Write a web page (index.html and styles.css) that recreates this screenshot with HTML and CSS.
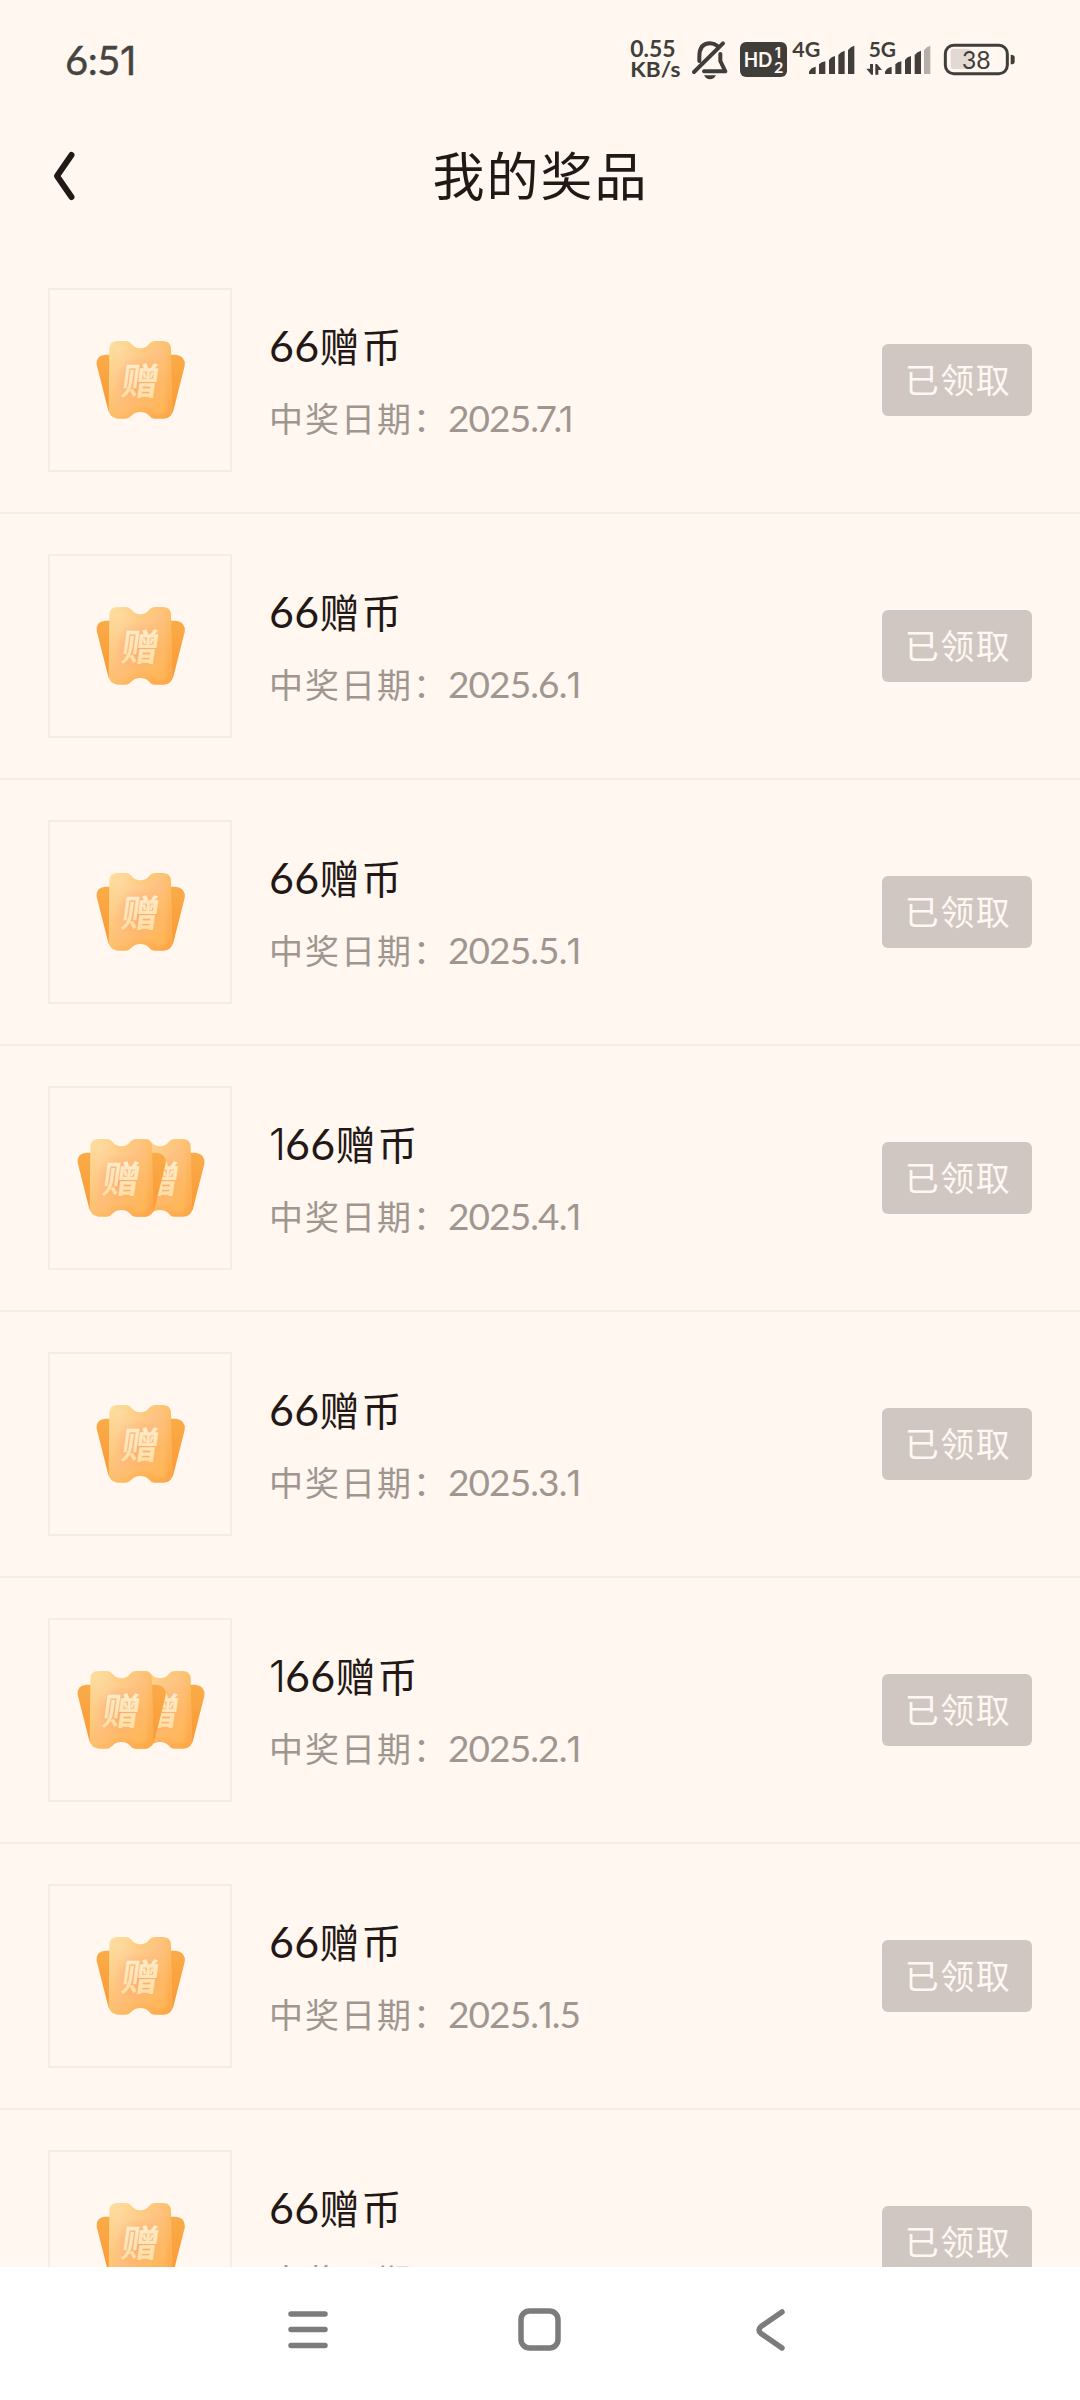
FILE: index.html
```html
<!DOCTYPE html>
<html lang="zh-CN">
<head>
<meta charset="utf-8">
<title>我的奖品</title>
<link rel="stylesheet" href="styles.css">
</head>
<body>
<svg class="defs" aria-hidden="true">
  <defs>
    <linearGradient id="back" x1="0" y1="0" x2="0" y2="1"><stop offset="0" stop-color="#f9ac49"/><stop offset="1" stop-color="#fb9833"/></linearGradient>
    <linearGradient id="rim" x1="0" y1="0" x2="1" y2="1"><stop offset="0" stop-color="#fde0a2"/><stop offset=".5" stop-color="#fdbf6d"/><stop offset="1" stop-color="#fda544"/></linearGradient>
    <linearGradient id="face" x1="0" y1="0" x2=".8" y2="1"><stop offset="0" stop-color="#fedea4"/><stop offset=".5" stop-color="#fec07d"/><stop offset="1" stop-color="#ffb658"/></linearGradient>
    <radialGradient id="glow"><stop offset="0" stop-color="#f99d67" stop-opacity=".6"/><stop offset="1" stop-color="#f99d67" stop-opacity="0"/></radialGradient>
    <linearGradient id="ink" x1="0" y1="0" x2="0" y2="1"><stop offset="0" stop-color="#fff0d9"/><stop offset="1" stop-color="#ffdc9d"/></linearGradient>
    <filter id="soft" x="-10%" y="-10%" width="120%" height="120%"><feGaussianBlur stdDeviation="4"/></filter>
  </defs>
  <symbol id="ticket" viewBox="0 0 600 600">
    <path d="M195 224H408Q438 228 434 258L400 392Q397 403 385 403L370 380H230L220 403Q207 400 205 392L170 254Q168 226 195 224Z" fill="url(#back)"/>
    <path d="M233 183H258Q268 183 275 192Q286 205 301 205Q317 205 327 192Q334 183 344 183H368Q393 183 393 208L398 390Q396 415 372 416H342Q332 415 326 406Q316 396 301 396Q286 396 276 406Q268 415 258 416H232Q208 412 206 390L208 208Q208 183 233 183Z" fill="url(#rim)"/>
    <path filter="url(#soft)" d="M242 198H258Q276 218 301 218Q326 218 344 198H362Q378 200 378 218V384Q376 401 360 401H346Q332 381 301 381Q272 381 256 401H240Q224 400 224 384V218Q226 200 242 198Z" fill="url(#face)"/>
    <ellipse cx="298" cy="305" rx="75" ry="75" fill="url(#glow)"/>
  </symbol>
</svg>
<div class="screen">
  <header class="status">
    <div class="clock">6:5<span class="one">1</span></div>
    <svg class="status-icons" viewBox="0 0 1320 240" fill="#403e3a">
      <text x="91" y="111" font-size="67" textLength="136" lengthAdjust="spacingAndGlyphs">0.55</text>
      <text x="91" y="171" font-size="63" textLength="150" lengthAdjust="spacingAndGlyphs">KB/s</text>
      <g fill="none" stroke="#403e3a" stroke-width="12" stroke-linecap="round" stroke-linejoin="round">
        <path d="M369 70L282 156M298 123V110Q298 70 330 70Q342 70 351 77M361 102V123L376 154H312"/>
      </g>
      <path d="M312 166H348Q342 178 330 178Q318 178 312 166Z"/>
      <rect x="420" y="66" width="141" height="105" rx="18"/>
      <g fill="#fff7f0">
        <text x="431" y="141" font-size="64" textLength="86" lengthAdjust="spacingAndGlyphs">HD</text>
        <text class="one" x="524" y="113" font-size="43">1</text>
        <text x="522" y="158" font-size="48">2</text>
      </g>
      <text x="577" y="112" font-size="65" textLength="84" lengthAdjust="spacingAndGlyphs">4G</text>
      <path d="M627 162V155Q632 143 647 140V162ZM657 162V133Q664 126 676 124V162ZM687 162V120Q694 110 705 108V162ZM715 162V105Q723 94 734 92V162ZM744 162V90Q752 79 763 77V162Z"/>
      <text x="806" y="112" font-size="65" textLength="82" lengthAdjust="spacingAndGlyphs">5G</text>
      <path d="M799 146H810V132H819V164H814ZM826 132H831L846 150H835V164H826ZM855 162V155Q860 143 875 140V162ZM886 162V133Q893 126 904 124V162ZM915 162V120Q922 110 933 108V162ZM944 162V105Q952 94 963 92V162Z"/>
      <path d="M972 162V90Q980 79 991 77V162Z" fill="#b5afa9"/>
      <rect x="1052" y="86" width="62" height="61" rx="10" fill="#e2d9d5"/>
      <rect x="1036" y="76" width="186" height="85" rx="25" fill="none" stroke="#403e3a" stroke-width="9"/>
      <path d="M1232 104Q1244 104 1244 112V125Q1244 133 1232 133Z"/>
      <text class="level" x="1086" y="146" font-size="76" textLength="86" lengthAdjust="spacingAndGlyphs">38</text>
    </svg>
  </header>
  <div class="titlebar">
    <svg class="back" viewBox="0 0 30 56"><path d="M22.500 7L8 28L22.500 49"/></svg>
    <h1>我的奖品</h1>
  </div>
  <main class="list">
    <article class="row">
      <svg class="thumb" viewBox="30 30 540 540"><use href="#ticket" width="600" height="600"/><text transform="translate(240 344) skewX(-8)">赠</text></svg>
      <div class="info"><h2><span class="num">66</span>赠币</h2><p>中奖日期：<span class="date">2025<span class="tight">.7.<span class="one">1</span></span></span></p></div>
      <button class="claimed">已领取</button>
    </article>
    <article class="row">
      <svg class="thumb" viewBox="30 30 540 540"><use href="#ticket" width="600" height="600"/><text transform="translate(240 344) skewX(-8)">赠</text></svg>
      <div class="info"><h2><span class="num">66</span>赠币</h2><p>中奖日期：<span class="date">2025.6.<span class="one">1</span></span></p></div>
      <button class="claimed">已领取</button>
    </article>
    <article class="row">
      <svg class="thumb" viewBox="30 30 540 540"><use href="#ticket" width="600" height="600"/><text transform="translate(240 344) skewX(-8)">赠</text></svg>
      <div class="info"><h2><span class="num">66</span>赠币</h2><p>中奖日期：<span class="date">2025.5.<span class="one">1</span></span></p></div>
      <button class="claimed">已领取</button>
    </article>
    <article class="row">
      <svg class="thumb" viewBox="30 30 540 540"><use href="#ticket" x="59" width="600" height="600"/><text transform="translate(299 344) skewX(-8)">赠</text><use href="#ticket" x="-57" width="600" height="600"/><text transform="translate(183 344) skewX(-8)">赠</text></svg>
      <div class="info"><h2><span class="num"><span class="one">1</span>66</span>赠币</h2><p>中奖日期：<span class="date">2025.4.<span class="one">1</span></span></p></div>
      <button class="claimed">已领取</button>
    </article>
    <article class="row">
      <svg class="thumb" viewBox="30 30 540 540"><use href="#ticket" width="600" height="600"/><text transform="translate(240 344) skewX(-8)">赠</text></svg>
      <div class="info"><h2><span class="num">66</span>赠币</h2><p>中奖日期：<span class="date">2025.3.<span class="one">1</span></span></p></div>
      <button class="claimed">已领取</button>
    </article>
    <article class="row">
      <svg class="thumb" viewBox="30 30 540 540"><use href="#ticket" x="59" width="600" height="600"/><text transform="translate(299 344) skewX(-8)">赠</text><use href="#ticket" x="-57" width="600" height="600"/><text transform="translate(183 344) skewX(-8)">赠</text></svg>
      <div class="info"><h2><span class="num"><span class="one">1</span>66</span>赠币</h2><p>中奖日期：<span class="date">2025.2.<span class="one">1</span></span></p></div>
      <button class="claimed">已领取</button>
    </article>
    <article class="row">
      <svg class="thumb" viewBox="30 30 540 540"><use href="#ticket" width="600" height="600"/><text transform="translate(240 344) skewX(-8)">赠</text></svg>
      <div class="info"><h2><span class="num">66</span>赠币</h2><p>中奖日期：<span class="date">2025.<span class="one">1</span>.5</span></p></div>
      <button class="claimed">已领取</button>
    </article>
    <article class="row">
      <svg class="thumb" viewBox="30 30 540 540"><use href="#ticket" width="600" height="600"/><text transform="translate(240 344) skewX(-8)">赠</text></svg>
      <div class="info"><h2><span class="num">66</span>赠币</h2><p>中奖日期：<span class="date">2024.9.<span class="one">1</span></span></p></div>
      <button class="claimed">已领取</button>
    </article>
  </main>
  <nav class="navbar">
    <svg viewBox="0 0 60 60"><path d="M13 15H47M13 30.500H47M13 46.500H47"/></svg>
    <svg viewBox="0 0 60 60"><rect x="11" y="12" width="37" height="37" rx="8.500"/></svg>
    <svg viewBox="0 0 60 60"><path d="M40 13L19 27.500Q15 31 19 34.500L40 49"/></svg>
  </nav>
</div>
</body>
</html>
```

FILE: styles.css
```css
* { box-sizing: border-box; }
body {
  margin: 0;
  background: #fff7f0;
  color: #231815;
  font-family: Lato, "Noto Sans CJK SC", sans-serif;
}
h1, h2, p { margin: 0; font-weight: 400; white-space: nowrap; }
.defs { position: absolute; width: 0; height: 0; }
.screen { display: flex; flex-direction: column; height: 2400px; overflow: hidden; }
.status {
  flex: none;
  display: flex;
  align-items: flex-start;
  justify-content: space-between;
  height: 104px;
  padding: 20px 40px 0 65px;
}
.clock { padding-top: 16px; font-size: 40px; line-height: 48px; color: #464440; -webkit-text-stroke: .4px #464440; letter-spacing: -.5px; }
.one { font-family: Inter, sans-serif; letter-spacing: 0; }
.status-icons { width: 440px; height: 80px; font-family: Lato, sans-serif; font-weight: 700; }
.status-icons .level { font-weight: 400; }
.titlebar { flex: none; display: flex; align-items: center; height: 144px; padding: 0 78px 0 49px; }
.back { width: 30px; height: 56px; fill: none; stroke: #231815; stroke-width: 6; stroke-linecap: round; stroke-linejoin: round; }
h1 { flex: 1; text-align: center; font-size: 52px; line-height: 76px; letter-spacing: 2px; }
.list { flex: 1; min-height: 0; overflow: hidden; }
.row {
  display: flex;
  align-items: center;
  height: 266px;
  padding: 0 48px;
  border-bottom: 2px solid #f5ede8;
}
.thumb { flex: none; width: 184px; height: 184px; border: 2px solid #f5ece7; }
.thumb text {
  font-family: "Noto Sans CJK SC", sans-serif;
  font-size: 112px;
  font-weight: 700;
  fill: url(#ink);
}
.info { flex: 1; padding: 3px 0 0 37px; }
h2 { height: 72px; font-size: 40px; line-height: 72px; letter-spacing: 2px; }
.num { font-size: 43px; letter-spacing: .3px; }
.num .one { font-weight: 300; letter-spacing: -1px; }
.info p { height: 72px; font-size: 34px; line-height: 72px; letter-spacing: 2px; color: #9f9690; }
.date { margin-left: -1px; font-size: 37px; letter-spacing: -.9px; }
.date .one { font-size: 36px; letter-spacing: -1px; }
.tight { letter-spacing: -3.500px; }
.claimed {
  width: 150px;
  height: 72px;
  padding: 0 0 3px 2px;
  border: 0;
  border-radius: 6px;
  background: #d0c7c2;
  color: #fff7f0;
  font: 34px/69px "Noto Sans CJK SC", sans-serif;
  letter-spacing: 1.500px;
}
.navbar {
  flex: none;
  display: flex;
  justify-content: center;
  gap: 172px;
  height: 133px;
  padding-top: 32px;
  background: #fff;
}
.navbar svg { width: 60px; height: 60px; fill: none; stroke: #7c7c7c; stroke-width: 5.500; stroke-linecap: round; stroke-linejoin: round; }
```
